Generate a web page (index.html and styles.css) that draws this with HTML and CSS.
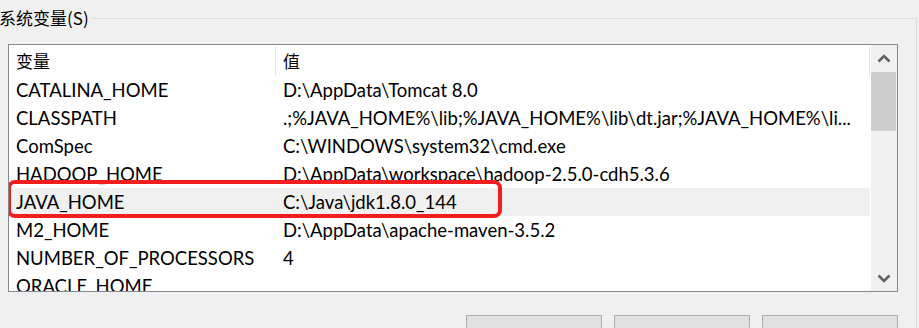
FILE: index.html
```html
<!DOCTYPE html>
<html lang="zh-CN">
<head>
<meta charset="utf-8">
<title>系统变量</title>
<link rel="stylesheet" href="styles.css">
</head>
<body>
<fieldset class="group">
  <legend class="group-title">系统变量(S)</legend>
  <div class="listview">
    <div class="list-body">
      <div class="row header">
        <div class="cell head-cell">变量</div>
        <div class="cell head-cell">值</div>
      </div>
      <div class="row"><div class="cell">CATALINA_HOME</div><div class="cell">D:\AppData\Tomcat 8.0</div></div>
      <div class="row"><div class="cell">CLASSPATH</div><div class="cell">.;%JAVA_HOME%\lib;%JAVA_HOME%\lib\dt.jar;%JAVA_HOME%\li...</div></div>
      <div class="row"><div class="cell">ComSpec</div><div class="cell">C:\WINDOWS\system32\cmd.exe</div></div>
      <div class="row"><div class="cell">HADOOP_HOME</div><div class="cell">D:\AppData\workspace\hadoop-2.5.0-cdh5.3.6</div></div>
      <div class="row selected"><div class="cell">JAVA_HOME</div><div class="cell">C:\Java\jdk1.8.0_144</div></div>
      <div class="row"><div class="cell">M2_HOME</div><div class="cell">D:\AppData\apache-maven-3.5.2</div></div>
      <div class="row"><div class="cell">NUMBER_OF_PROCESSORS</div><div class="cell">4</div></div>
      <div class="row"><div class="cell">ORACLE_HOME</div><div class="cell"></div></div>
      <div class="highlight-box"></div>
    </div>
    <div class="scrollbar">
      <div class="sb-btn">
        <svg width="14" height="9" viewBox="0 0 14 9"><polyline points="1.5,7.5 7,2 12.5,7.5" fill="none" stroke="#606060" stroke-width="2.6"/></svg>
      </div>
      <div class="sb-thumb"></div>
      <div class="sb-track"></div>
      <div class="sb-btn">
        <svg width="14" height="9" viewBox="0 0 14 9"><polyline points="1.5,1.5 7,7 12.5,1.5" fill="none" stroke="#606060" stroke-width="2.6"/></svg>
      </div>
    </div>
  </div>
  <div class="buttons">
    <button class="btn">新建(W)...</button>
    <button class="btn">编辑(I)...</button>
    <button class="btn">删除(L)</button>
  </div>
</fieldset>
</body>
</html>
```
FILE: styles.css
```css
html, body {
  margin: 0;
  padding: 0;
  background: #f0f0f0;
  overflow: hidden;
  width: 919px;
  height: 328px;
}
body {
  font-family: "Lato", "Noto Sans CJK SC", sans-serif;
  font-size: 18.5px;
  color: #000;
}
.group {
  margin: 6px 0 0 -18px;
  width: 935px;
  box-sizing: border-box;
  border: 1px solid #dcdcdc;
  padding: 14px 18px 0 25px;
  min-inline-size: 0;
}
.group-title {
  padding: 0 3px 0 0;
  margin-left: -9px;
  line-height: 24px;
  font-family: "Noto Sans CJK SC", sans-serif;
  font-size: 17px;
}
.listview {
  position: relative;
  display: flex;
  height: 248px;
  box-sizing: border-box;
  border: 1px solid #828790;
  background: #fff;
}
.list-body {
  position: relative;
  flex: 1;
  overflow: hidden;
}
.row {
  display: grid;
  grid-template-columns: 267px 1fr;
  height: 28px;
  line-height: 28px;
  white-space: nowrap;
}
.row .cell {
  padding-left: 7px;
  overflow: hidden;
}
.row.header {
  height: 31px;
  line-height: 31px;
  padding-top: 1px;
  box-sizing: border-box;
}
.head-cell {
  font-family: "Noto Sans CJK SC", sans-serif;
  font-size: 17px;
  border-right: 1px solid #e5e5e5;
  line-height: 29px;
}
.row.selected {
  background: #f0f0f0;
}
.highlight-box {
  position: absolute;
  left: -2px;
  top: 135px;
  width: 495px;
  height: 38px;
  box-sizing: border-box;
  border: 4.5px solid #f01e1e;
  border-radius: 8px;
}
.scrollbar {
  width: 26px;
  display: flex;
  flex-direction: column;
  background: #f0f0f0;
  border-left: 1px solid #fff;
}
.sb-btn {
  height: 26px;
  display: flex;
  align-items: center;
  justify-content: center;
  flex: none;
}
.sb-thumb {
  height: 59px;
  margin: 1px 1px 0 0;
  background: #cdcdcd;
  flex: none;
}
.sb-track {
  flex: 1;
}
.buttons {
  display: flex;
  justify-content: flex-end;
  gap: 12px;
  margin-top: 23px;
}
.btn {
  width: 136px;
  height: 34px;
  background: #e1e1e1;
  border: 1px solid #adadad;
  font-family: "Noto Sans CJK SC", sans-serif;
  font-size: 17px;
  padding: 0;
  padding-top: 14px;
  color: #000;
}
```
